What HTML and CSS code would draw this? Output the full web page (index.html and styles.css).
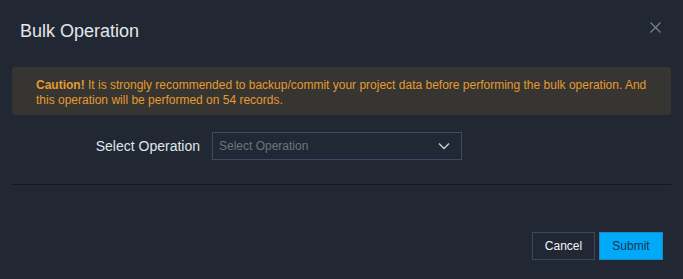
FILE: index.html
```html
<!DOCTYPE html>
<html>
<head>
<meta charset="utf-8">
<link rel="stylesheet" href="styles.css">
</head>
<body>
<div class="modal">
  <div class="modal-header">
    <h2 class="modal-title">Bulk Operation</h2>
    <button class="close" aria-label="Close">
      <svg width="11" height="11" viewBox="0 0 11 11"><path d="M0.5 0.5L10.5 10.5M10.5 0.5L0.5 10.5" stroke="#7c8594" stroke-width="1.1" fill="none"/></svg>
    </button>
  </div>
  <div class="modal-body">
    <p class="caution"><strong class="caution-title">Caution!</strong> It is strongly recommended to backup/commit your project data before performing the bulk operation. And this operation will be performed on 54 records.</p>
    <div class="form-row">
      <label class="form-label">Select Operation</label>
      <div class="select">
        <span class="placeholder">Select Operation</span>
        <svg class="chevron" width="12" height="8" viewBox="0 0 12 8"><path d="M1 1.5L6 6.5L11 1.5" stroke="#c8d0da" stroke-width="1.4" fill="none"/></svg>
      </div>
    </div>
  </div>
  <div class="modal-footer">
    <button class="btn btn-cancel">Cancel</button>
    <button class="btn btn-submit">Submit</button>
  </div>
</div>
</body>
</html>
```
FILE: styles.css
```css
html, body {
  margin: 0;
  padding: 0;
  background: #222833;
  font-family: "Liberation Sans", Arial, sans-serif;
}
.modal {
  width: 683px;
  height: 279px;
  box-sizing: border-box;
  background: #222833;
  border-radius: 4px;
  display: flex;
  flex-direction: column;
}
.modal-header {
  display: flex;
  justify-content: space-between;
  align-items: flex-start;
  padding: 21px 22px 0 20px;
  height: 46px;
}
.modal-title {
  margin: 0;
  font-size: 18px;
  font-weight: normal;
  color: #e3e6ea;
  line-height: 20px;
}
.close {
  background: none;
  border: 0;
  padding: 0;
  margin-top: 1px;
  width: 11px;
  height: 11px;
  display: flex;
}
.modal-body {
  padding: 0 12px;
}
.caution {
  margin: 0;
  background: #363532;
  border-radius: 3px;
  padding: 11px 24px 8px 24px;
  font-size: 12px;
  line-height: 15px;
  color: #e59a2e;
  height: 48px;
  box-sizing: border-box;
}
.caution-title {
  font-weight: bold;
}
.form-row {
  display: flex;
  align-items: center;
  gap: 12px;
  padding: 17px 0 24px 0;
  border-bottom: 1px solid #141920;
}
.form-label {
  font-size: 14px;
  color: #dfe5ec;
  width: 188px;
  text-align: right;
}
.select {
  width: 250px;
  height: 28px;
  box-sizing: border-box;
  border: 1px solid #3a4a68;
  display: flex;
  align-items: center;
  justify-content: space-between;
  padding: 0 11px 0 6px;
}
.placeholder {
  font-size: 12px;
  color: #6c737e;
}
.modal-footer {
  display: flex;
  justify-content: flex-end;
  gap: 4px;
  padding: 47px 20px 0 0;
}
.btn {
  font-family: "Liberation Sans", Arial, sans-serif;
  font-size: 12px;
  height: 28px;
  box-sizing: border-box;
  padding: 0;
  cursor: pointer;
}
.btn-cancel {
  width: 63px;
  background: transparent;
  border: 1px solid #3a4762;
  color: #f2f4f6;
}
.btn-submit {
  width: 64px;
  background: #00aaf8;
  border: 1px solid #1c88c8;
  color: #173452;
}
```
